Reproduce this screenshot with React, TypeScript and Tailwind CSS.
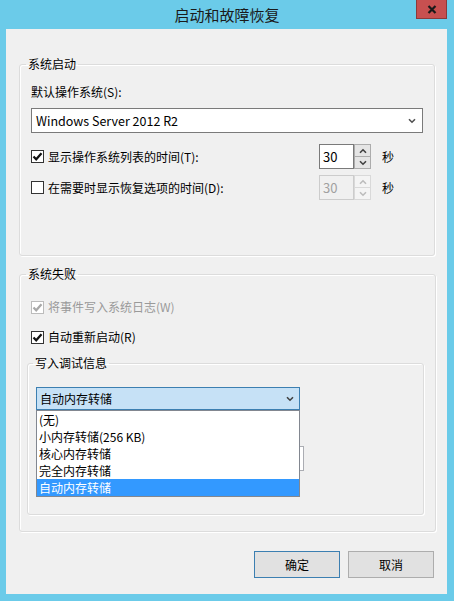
import React from 'react'

function Chevron({ className = '' }: { className?: string }) {
  return (
    <svg width="8" height="6" viewBox="0 0 8 6" className={className}>
      <path d="M1 1.2 L4 4.2 L7 1.2" fill="none" stroke="currentColor" strokeWidth="1.6" />
    </svg>
  )
}

function CheckBox({ checked, disabled }: { checked?: boolean; disabled?: boolean }) {
  return (
    <span
      className={`w-[13px] h-[13px] flex items-center justify-center border bg-white shrink-0 ${
        disabled ? 'border-[#bcbcbc] text-[#a8a8a8]' : 'border-[#333] text-[#111]'
      }`}
    >
      {checked && (
        <svg width="11" height="11" viewBox="0 0 11 11">
          <path d="M1.5 5.5 L4.2 8.3 L9.5 2.2" fill="none" stroke="currentColor" strokeWidth="2.2" />
        </svg>
      )}
    </span>
  )
}

function Spin({ disabled }: { disabled?: boolean }) {
  return (
    <div className="flex h-[25px]">
      <div
        className={`w-[35px] h-full border flex items-center pl-[3px] text-[13px] ${
          disabled ? 'border-[#cccccc] bg-[#f0f0f0] text-[#a0a0a0]' : 'border-[#7a7a7a] bg-white text-black'
        }`}
      >
        30
      </div>
      <div className="flex flex-col w-[17px] h-full">
        {['up', 'down'].map((d) => (
          <div
            key={d}
            className={`flex-1 flex items-center justify-center border ${
              d === 'up' ? 'border-b-0' : ''
            } ${disabled ? 'border-[#d9d9d9] bg-[#f4f4f4] text-[#bcbcbc]' : 'border-[#acacac] bg-[#e5e5e5] text-[#404040]'}`}
          >
            <Chevron className={d === 'up' ? 'rotate-180' : ''} />
          </div>
        ))}
      </div>
      <span className="ml-[11px] self-center text-[12px]">秒</span>
    </div>
  )
}

const groupCls =
  'border border-[#dcdcdc] rounded-[3px] shadow-[1px_1px_0_#fff,inset_1px_1px_0_#fff]'

export default function App() {
  const items = ['(无)', '小内存转储(256 KB)', '核心内存转储', '完全内存转储', '自动内存转储']
  return (
    <div
      className="w-[454px] h-[601px] bg-[#6bcbe9] flex flex-col text-[12px] text-black leading-[16px]"
      style={{ fontFamily: '"Noto Sans CJK SC", "Noto Sans", sans-serif' }}
    >
      <div className="h-[29px] relative flex items-center justify-center shrink-0">
        <span className="text-[15px] text-[#1a1a1a] leading-[20px]">启动和故障恢复</span>
        <div className="absolute top-0 right-[7px] w-[31px] h-[19px] bg-[#c75050] border border-t-0 border-[#8c3a3a] flex items-center justify-center">
          <svg width="10" height="9" viewBox="0 0 10 9">
            <path d="M1.5 1 L8.5 8 M8.5 1 L1.5 8" stroke="#1a1a1a" strokeWidth="2.2" />
          </svg>
        </div>
      </div>

      <div className="ml-[6px] w-[441px] h-[565px] bg-[#f0f0f0] pt-[27px] px-[13px] flex flex-col">
        <fieldset className={`${groupCls} h-[200px] px-[11px]`}>
          <legend className="-ml-[5px] px-[2px]">系统启动</legend>
          <div className="mt-[12px]">默认操作系统(S):</div>
          <div className="mt-[8px] w-[392px] h-[25px] bg-white border border-[#7a7a7a] flex items-center justify-between pl-[4px] pr-[6px]">
            <span className="text-[12.5px]">Windows Server 2012 R2</span>
            <Chevron className="text-[#505050]" />
          </div>
          <div className="mt-[11px] flex items-center">
            <div className="w-[288px] flex items-center gap-[4px]">
              <CheckBox checked />
              <span>显示操作系统列表的时间(T):</span>
            </div>
            <Spin />
          </div>
          <div className="mt-[6px] flex items-center">
            <div className="w-[288px] flex items-center gap-[4px]">
              <CheckBox />
              <span>在需要时显示恢复选项的时间(D):</span>
            </div>
            <Spin disabled />
          </div>
        </fieldset>

        <fieldset className={`${groupCls} mt-[10px] h-[266px] px-[11px]`}>
          <legend className="-ml-[5px] px-[2px]">系统失败</legend>
          <div className="mt-[17px] flex items-center gap-[4px] text-[#9a9a9a]">
            <CheckBox checked disabled />
            <span>将事件写入系统日志(W)</span>
          </div>
          <div className="mt-[14px] flex items-center gap-[4px]">
            <CheckBox checked />
            <span>自动重新启动(R)</span>
          </div>
          <fieldset className={`${groupCls} mt-[10px] -ml-[4px] w-[397px] h-[160px] px-[8px]`}>
            <legend className="-ml-[3px] px-[2px]">写入调试信息</legend>
            <div className="relative mt-[16px] w-[264px]">
              <div className="h-[23px] bg-[#c6e1f6] border border-[#3c7fb1] flex items-center justify-between pl-[3px] pr-[5px]">
                <span>自动内存转储</span>
                <Chevron className="text-[#404040]" />
              </div>
              <ul className="absolute left-0 top-full w-[264px] bg-white border border-[#828790] z-10">
                {items.map((t, i) => (
                  <li
                    key={t}
                    className={`h-[17px] pl-[2px] flex items-center ${
                      i === items.length - 1 ? 'bg-[#3399ff] text-white' : ''
                    }`}
                  >
                    {t}
                  </li>
                ))}
              </ul>
            </div>
            <div className="mt-[36px] w-[268px] h-[25px] bg-white border border-[#abadb3]" />
          </fieldset>
        </fieldset>

        <div className="mt-[19px] flex justify-end gap-[8px]">
          <button className="w-[86px] h-[27px] bg-[#e1e1e1] border border-[#3c7fb1]">确定</button>
          <button className="w-[86px] h-[27px] bg-[#e1e1e1] border border-[#adadad]">取消</button>
        </div>
      </div>
    </div>
  )
}
